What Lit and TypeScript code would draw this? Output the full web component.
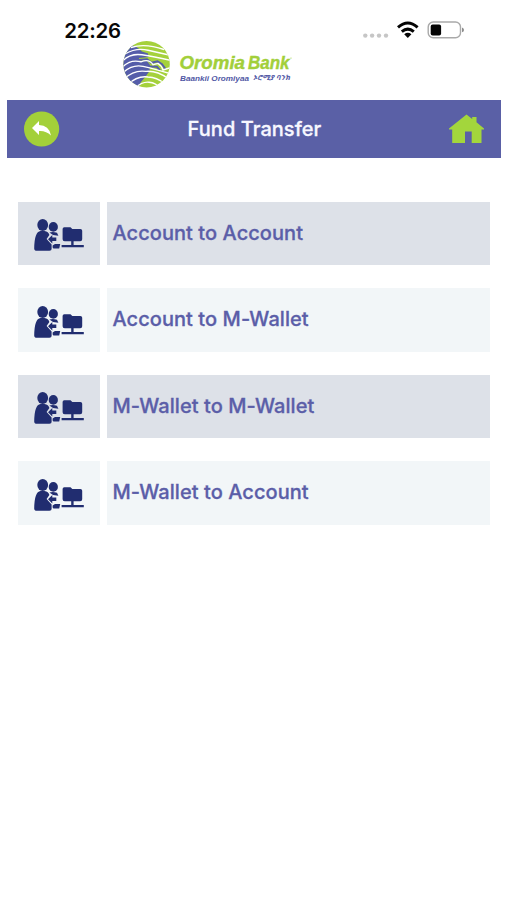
import { LitElement, html, css, svg } from "lit";
import { customElement, property } from "lit/decorators.js";

@customElement("status-bar")
class StatusBar extends LitElement {
  static styles = css`
    :host { display: flex; height: 41px; box-sizing: border-box; padding: 18px 43px 0 64.3px; justify-content: space-between; align-items: flex-start; }
    .time { font: 600 20.4px/25px Inter, sans-serif; letter-spacing: -0.2px; color: #080808; }
    svg { display: block; }
  `;
  render() {
    return html`
      <span class="time">22:26</span>
      <svg width="104" height="24" viewBox="360 18 104 24">
        <g fill="#c6c6c6">
          <circle cx="365.3" cy="35.6" r="2.2" /><circle cx="372.1" cy="35.6" r="2.2" />
          <circle cx="379" cy="35.6" r="2.2" /><circle cx="386" cy="35.6" r="2.2" />
        </g>
        <g fill="none" stroke="#050505" stroke-width="3">
          <path d="M398 27.3Q407.8 18.8 417.6 27.3" />
          <path d="M401.8 31.6Q407.8 26.6 413.8 31.6" />
        </g>
        <path d="M404.2 34.3Q407.8 31.4 411.4 34.3L407.8 38Z" fill="#050505" />
        <rect x="428.2" y="22" width="32.3" height="15.8" rx="5" fill="#fff" stroke="#a9a9a9" stroke-width="1.4" />
        <rect x="430.7" y="24.4" width="10.4" height="11" rx="2" fill="#050505" />
        <path d="M462 27.6Q464 28.3 464 29.9T462 32.2Z" fill="#8c8c8c" />
      </svg>
    `;
  }
}

@customElement("brand-logo")
class BrandLogo extends LitElement {
  static styles = css`
    :host { display: block; height: 59px; padding-left: 122px; }
    svg { display: block; }
    .name { font: italic 700 18px "Liberation Sans", sans-serif; fill: #a2cf3a; stroke: #a2cf3a; stroke-width: 0.4px; }
    .sub { font: italic 700 7.8px "Liberation Sans", sans-serif; fill: #5158a5; }
    .geez { font: italic 700 7px "Noto Sans Ethiopic", "Noto Sans", sans-serif; fill: #5158a5; }
  `;
  render() {
    return html`
      <svg width="174" height="50" viewBox="122 41 174 50">
        <defs><clipPath id="globe"><circle cx="146.6" cy="64.2" r="23.2" /></clipPath></defs>
        <g clip-path="url(#globe)">
          <rect x="122" y="40" width="50" height="50" fill="#a5d13c" />
          <path d="M122 46L132 45L138 48L142 51.5L148 53.5L148.5 57L139 58L139 61.5L147 61L150 65L149.5 71L146 76L141 82L138 89H122Z" fill="#555da9" />
          <path d="M139 60L147 59.2L151.5 62.8L157.5 61.4L162 64.2L165.5 69M149 66.5L157 66.8L160 70.4" fill="none" stroke="#555da9" stroke-width="2" />
          <g fill="none" stroke="#fff" stroke-width="1.4">
            <path d="M131 47.5Q145 43 164 49.5" />
            <path d="M125 54Q136 47.5 148 50.2T169 55" />
            <path d="M122 61.5Q130 53 142 54.8T171 60.5" />
            <path d="M122 67.5Q130 59 141 61.8Q149 58.4 153 64.6L158 63.4Q162 66 163 70L171 67.5" />
            <path d="M122 73.5Q132 64 143 66.4T170 73.6" />
            <path d="M124 79Q134 69.5 146 71.4Q157 70.5 168 78.5" />
            <path d="M128 84.5Q137 75.5 148 77Q157 77.5 164 83" />
            <path d="M135 88Q142 81.5 149 82.2T159 87" />
          </g>
        </g>
        <text class="name" x="179.5" y="69" textLength="65.5" lengthAdjust="spacingAndGlyphs">Oromia</text>
        <text class="name" x="248" y="69" textLength="41.5" lengthAdjust="spacingAndGlyphs">Bank</text>
        <circle cx="291" cy="58" r="0.6" fill="#a2cf3a" />
        <text class="sub" x="180" y="80.6" textLength="69" lengthAdjust="spacingAndGlyphs">Baankii Oromiyaa</text>
        <text class="geez" x="253" y="80.3" textLength="37" lengthAdjust="spacingAndGlyphs">ኦሮሚያ ባንክ</text>
      </svg>
    `;
  }
}

@customElement("title-bar")
class TitleBar extends LitElement {
  static styles = css`
    :host { display: flex; height: 57.5px; margin: 0 6px 0 7px; padding: 0 17px; box-sizing: border-box; background: #5a60a6; align-items: center; justify-content: space-between; }
    svg { display: block; }
    .title { font: 500 20px/24px Inter, sans-serif; letter-spacing: 0.05px; color: #f7f7ff; -webkit-text-stroke: 0.3px #f7f7ff; }
  `;
  render() {
    return html`
      <svg width="36" height="36" viewBox="0 0 36 36">
        <circle cx="17.6" cy="18" r="17.6" fill="#a3d039" />
        <path d="M8 17L15 10V14Q25 14 27 24.5Q22 19.5 15 20V24Z" fill="#fff" />
      </svg>
      <span class="title">Fund Transfer</span>
      <svg width="35" height="30" viewBox="449 113 35 30">
        <path d="M449 127.5L466.5 113.5L472.2 118V116H476.5V121.3L484 127.5V128.6H481.5V142H471.7V130.4H465V142H452.2V128.6H449Z" fill="#a3d63c" />
      </svg>
    `;
  }
}

const transferIcon = svg`
  <g fill="#212d70">
    <ellipse cx="42.7" cy="225" rx="5.4" ry="5.9" />
    <path d="M34.2 248.5Q34.4 231.5 40.5 231H44.5Q48.5 231.4 49.4 235L46.6 239L51.6 244.5V249Q51.6 250.8 49.5 250.8H37Q34.2 250.8 34.2 248.5Z" />
    <ellipse cx="53.3" cy="226.9" rx="4.6" ry="4.9" />
    <path d="M49.4 232.4Q53.5 231.6 57 232.8L58.4 235.8L53 235Z" />
    <path d="M48 239.2L52.3 235V237.5H56.3V241H52.3V243.6Z" />
    <path d="M52.6 247.4V245.6L55 244H60.2L59.2 248.4H53.4Z" />
    <path d="M62.6 229Q62.6 227.3 64.3 227.3H70.5L72.3 228.9H80.4Q82.2 228.9 82.2 230.7V239.3Q82.2 241.3 80.2 241.3H73.6V245H83.8V247.2H61.6V245H71.2V241.3H64.7Q62.6 241.3 62.6 239.3Z" />
  </g>`;

@customElement("transfer-option")
class TransferOption extends LitElement {
  @property() label = "";
  static styles = css`
    :host { display: grid; grid-template-columns: 81.5px 1fr; column-gap: 7px; height: 63.4px; --cell: #dde1e8; }
    :host([light]) { --cell: #f2f6f8; }
    .icon, .label { background: var(--cell); display: flex; align-items: center; }
    svg { display: block; }
    .label { box-sizing: border-box; padding: 0 0 2px 6px; font: 500 20px/24px Inter, sans-serif; letter-spacing: 0.06px; color: #5b5ea8; -webkit-text-stroke: 0.3px #5b5ea8; }
  `;
  render() {
    return html`
      <div class="icon"><svg width="81" height="63" viewBox="18 202 81 63">${transferIcon}</svg></div>
      <div class="label">${this.label}</div>
    `;
  }
}

@customElement("app-root")
class AppRoot extends LitElement {
  static styles = css`
    :host { display: block; min-height: 900px; background: #fff; }
    .options { display: grid; row-gap: 23.1px; padding: 44.5px 17.2px 0 18px; }
  `;
  render() {
    return html`
      <status-bar></status-bar>
      <brand-logo></brand-logo>
      <title-bar></title-bar>
      <div class="options">
        <transfer-option label="Account to Account"></transfer-option>
        <transfer-option light label="Account to M-Wallet"></transfer-option>
        <transfer-option label="M-Wallet to M-Wallet"></transfer-option>
        <transfer-option light label="M-Wallet to Account"></transfer-option>
      </div>
    `;
  }
}
